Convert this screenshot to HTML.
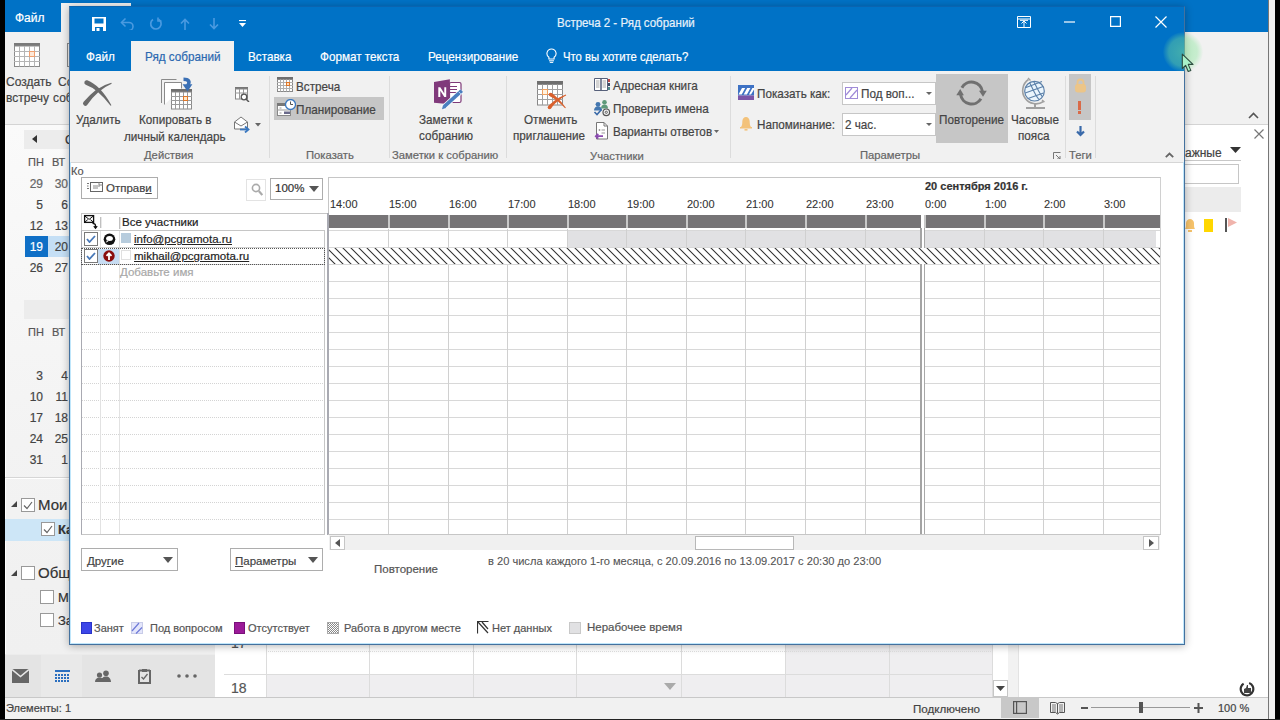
<!DOCTYPE html>
<html><head><meta charset="utf-8">
<style>
*{margin:0;padding:0;box-sizing:border-box}
html,body{width:1280px;height:720px;overflow:hidden;background:#000;font-family:"Liberation Sans",sans-serif;color:#444;font-size:12px}
.a{position:absolute;white-space:nowrap}
#main{position:absolute;left:5px;top:0;width:1263px;height:719px;background:#fff;overflow:hidden}
#dlg{position:absolute;left:69px;top:6px;width:1116px;height:639px;background:#fff;box-shadow:0 1px 8px rgba(0,0,0,.3);overflow:hidden}
#dlg .a,#main .a{-webkit-text-stroke:0.2px currentColor}
.blue{background:#0072c6}
.rib{background:#f1f1f1}
.t12{font-size:12px}
.t11{font-size:11px}
.sep{position:absolute;width:1px;background:#dadada}
</style></head><body>
<div id="main">
  <!-- title / tabs : coordinates are page x-5 -->
  <div class="a blue" style="left:0;top:0;width:1263px;height:32px"></div>
  <div class="a" style="left:10px;top:11px;color:#fff;font-size:12px">Файл</div>
  <div class="a rib" style="left:56px;top:3px;width:70px;height:29px"></div>
  <!-- ribbon -->
  <div class="a rib" style="left:0;top:32px;width:1263px;height:93px;border-bottom:1px solid #d4d4d4"></div>
  <svg class="a" style="left:9px;top:43px" width="27" height="24" viewBox="0 0 27 24"><rect x="0" y="0" width="26" height="3" fill="#7a7a7a"/><rect x="0.5" y="3" width="25" height="20.5" fill="#fff" stroke="#8a8a8a"/><path d="M5.5 3v20.5M10.5 3v20.5M15.5 3v20.5M20.5 3v20.5M0 8.5h26M0 13.5h26M0 18.5h26" stroke="#b5b5b5" stroke-width="1"/><rect x="15.5" y="8.5" width="5" height="5" fill="#fde8d8" stroke="#f0a070"/></svg>
  <div class="a" style="left:1px;top:75px;font-size:12px;color:#444">Создать</div>
  <div class="a" style="left:1px;top:91px;font-size:12px;color:#444">встречу</div>
  <div class="a" style="left:62px;top:43px;width:3px;height:24px;border:1px solid #8a8a8a;border-right:none"></div>
  <div class="a" style="left:53px;top:75px;font-size:12px;color:#444">Со</div>
  <div class="a" style="left:48px;top:91px;font-size:12px;color:#444">соб</div>
  <svg class="a" style="left:1243px;top:112px" width="11" height="7"><path d="M1 6l4.5-4.5L10 6" stroke="#555" stroke-width="1.6" fill="none"/></svg>
  <!-- left pane -->
  <div class="a" style="left:0;top:125px;width:210px;height:529px;background:linear-gradient(180deg,#fafafa 0,#f3f3f3 60%,#f0f0f0 100%)"></div><div class="a" style="left:0;top:125px;width:1px;height:529px;background:#fff"></div>
  <div class="a" style="left:19px;top:130px;width:200px;height:19px;background:#ececec"></div>
  <svg class="a" style="left:27px;top:135px" width="5" height="8"><path d="M5 0v8L0 4z" fill="#333"/></svg>
  <div class="a" style="left:60px;top:133px;font-size:12px;color:#333">Сентябрь 2016</div>
  <div class="a" style="left:60px;top:303px;font-size:12px;color:#333">Октябрь 2016</div>
  <div class="a" style="left:19px;top:300px;width:200px;height:19px;background:#ececec"></div>
  <div class="a" style="left:0;top:477px;width:210px;height:1px;background:#d6d6d6"></div><div class="a" style="left:0;top:478px;width:210px;height:1px;background:#fff"></div>
  <div class="a" style="left:0;top:519px;width:210px;height:22px;background:#cde6f7"></div>
  <div class="a" style="left:23px;top:156px;font-size:11px;color:#555">ПН</div>
  <div class="a" style="left:47px;top:156px;font-size:11px;color:#555">ВТ</div>
  <div class="a" style="left:14px;top:177px;width:24px;text-align:right;font-size:12px;color:#666">29</div>
  <div class="a" style="left:38px;top:177px;width:25px;text-align:right;font-size:12px;color:#666">30</div>
  <div class="a" style="left:14px;top:198px;width:24px;text-align:right;font-size:12px;color:#444">5</div>
  <div class="a" style="left:38px;top:198px;width:25px;text-align:right;font-size:12px;color:#444">6</div>
  <div class="a" style="left:14px;top:219px;width:24px;text-align:right;font-size:12px;color:#444">12</div>
  <div class="a" style="left:38px;top:219px;width:25px;text-align:right;font-size:12px;color:#444">13</div>
  <div class="a" style="left:20px;top:236px;width:23px;height:21px;background:#0f6fc6"></div>
  <div class="a" style="left:43px;top:236px;width:30px;height:21px;background:#c5dff5"></div>
  <div class="a" style="left:14px;top:240px;width:24px;text-align:right;font-size:12px;color:#fff">19</div>
  <div class="a" style="left:38px;top:240px;width:25px;text-align:right;font-size:12px;color:#444">20</div>
  <div class="a" style="left:14px;top:261px;width:24px;text-align:right;font-size:12px;color:#444">26</div>
  <div class="a" style="left:38px;top:261px;width:25px;text-align:right;font-size:12px;color:#444">27</div>
  <div class="a" style="left:23px;top:326px;font-size:11px;color:#555">ПН</div>
  <div class="a" style="left:47px;top:326px;font-size:11px;color:#555">ВТ</div>
  <div class="a" style="left:14px;top:369px;width:24px;text-align:right;font-size:12px;color:#444">3</div>
  <div class="a" style="left:38px;top:369px;width:25px;text-align:right;font-size:12px;color:#444">4</div>
  <div class="a" style="left:14px;top:390px;width:24px;text-align:right;font-size:12px;color:#444">10</div>
  <div class="a" style="left:38px;top:390px;width:25px;text-align:right;font-size:12px;color:#444">11</div>
  <div class="a" style="left:14px;top:411px;width:24px;text-align:right;font-size:12px;color:#444">17</div>
  <div class="a" style="left:38px;top:411px;width:25px;text-align:right;font-size:12px;color:#444">18</div>
  <div class="a" style="left:14px;top:432px;width:24px;text-align:right;font-size:12px;color:#444">24</div>
  <div class="a" style="left:38px;top:432px;width:25px;text-align:right;font-size:12px;color:#444">25</div>
  <div class="a" style="left:14px;top:453px;width:24px;text-align:right;font-size:12px;color:#444">31</div>
  <div class="a" style="left:38px;top:453px;width:25px;text-align:right;font-size:12px;color:#444">1</div>
  <svg class="a" style="left:6px;top:501px" width="6" height="6"><path d="M6 0v6H0z" fill="#444"/></svg>
  <div class="a" style="left:16px;top:498px;width:14px;height:14px;border:1px solid #999;background:#fff"></div>
  <svg class="a" style="left:18px;top:501px" width="10" height="9"><path d="M1 4.5l3 3L9 1" stroke="#666" stroke-width="1.2" fill="none"/></svg>
  <div class="a" style="left:33px;top:496px;font-size:15px;color:#333">Мои</div>
  <div class="a" style="left:36px;top:522px;width:14px;height:14px;border:1px solid #999;background:#fff"></div>
  <svg class="a" style="left:38px;top:525px" width="10" height="9"><path d="M1 4.5l3 3L9 1" stroke="#666" stroke-width="1.2" fill="none"/></svg>
  <div class="a" style="left:53px;top:522px;font-size:13px;color:#333;font-weight:bold">Ка</div>
  <svg class="a" style="left:6px;top:570px" width="6" height="6"><path d="M6 0v6H0z" fill="#444"/></svg>
  <div class="a" style="left:16px;top:566px;width:14px;height:14px;border:1px solid #999;background:#fff"></div>
  <div class="a" style="left:33px;top:564px;font-size:15px;color:#333">Общ</div>
  <div class="a" style="left:35px;top:590px;width:14px;height:14px;border:1px solid #999;background:#fff"></div>
  <div class="a" style="left:53px;top:590px;font-size:13px;color:#333">М</div>
  <div class="a" style="left:35px;top:613px;width:14px;height:14px;border:1px solid #999;background:#fff"></div>
  <div class="a" style="left:53px;top:613px;font-size:13px;color:#333">За</div>
  <!-- nav bar -->
  <div class="a" style="left:0;top:654px;width:210px;height:43px;background:#e4e4e4;border-top:1px solid #ececec"></div><div class="a" style="left:36px;top:655px;width:41px;height:42px;background:#e9e9e9"></div>
  <svg class="a" style="left:7px;top:669px" width="17" height="14"><path d="M0 0h17v14H0z" fill="#666"/><path d="M0 0.5l8.5 7 8.5-7" stroke="#e6e6e6" stroke-width="1.6" fill="none"/></svg>
  <svg class="a" style="left:50px;top:670px" width="15" height="13"><rect x="0" y="0" width="15" height="2" fill="#2b6fbf"/><g fill="#2b6fbf"><rect x="0" y="4" width="2" height="2"/><rect x="3" y="4" width="2" height="2"/><rect x="6" y="4" width="2" height="2"/><rect x="9" y="4" width="2" height="2"/><rect x="12" y="4" width="2" height="2"/><rect x="0" y="7" width="2" height="2"/><rect x="3" y="7" width="2" height="2"/><rect x="6" y="7" width="2" height="2"/><rect x="9" y="7" width="2" height="2"/><rect x="12" y="7" width="2" height="2"/><rect x="0" y="10" width="2" height="2"/><rect x="3" y="10" width="2" height="2"/><rect x="6" y="10" width="2" height="2"/><rect x="9" y="10" width="2" height="2"/><rect x="12" y="10" width="2" height="2"/></g></svg>
  <svg class="a" style="left:90px;top:670px" width="16" height="13"><circle cx="4.5" cy="5" r="2.6" fill="#666"/><circle cx="11" cy="3.2" r="2.8" fill="#666"/><path d="M0 12c0-3 2-4.5 4.5-4.5S9 9 9 12z M6 12c0-3.5 2.3-5.5 5-5.5s5 2 5 5.5z" fill="#666"/></svg>
  <svg class="a" style="left:133px;top:668px" width="13" height="16"><path d="M1 2.5h3M9 2.5h3M1 2v13h11V2" stroke="#666" stroke-width="2" fill="none"/><path d="M4 1h5v3H4z" fill="#666"/><path d="M3.5 9l2 2 4-5" stroke="#666" stroke-width="1.3" fill="none"/></svg>
  <svg class="a" style="left:172px;top:674px" width="20" height="4"><circle cx="2" cy="2" r="1.8" fill="#666"/><circle cx="10" cy="2" r="1.8" fill="#666"/><circle cx="18" cy="2" r="1.8" fill="#666"/></svg>
  <!-- calendar below -->
  <div class="a" style="left:261px;top:644px;width:520px;height:31px;background:#fff"></div>
  <div class="a" style="left:780px;top:644px;width:208px;height:31px;background:#efeef0"></div>
  <div class="a" style="left:261px;top:675px;width:727px;height:22px;background:#efeef0"></div>
  <div class="a" style="left:219px;top:674px;width:769px;height:1px;background:#dcdcdc"></div>
  <div class="a" style="left:261px;top:651px;width:727px;height:0;border-top:1px dotted #e0e0e0"></div>
  <div class="a" style="left:261px;top:644px;width:1px;height:53px;background:#dcdcdc"></div>
  <div class="a" style="left:364px;top:644px;width:1px;height:53px;background:#dcdcdc"></div>
  <div class="a" style="left:468px;top:644px;width:1px;height:53px;background:#dcdcdc"></div>
  <div class="a" style="left:571px;top:644px;width:1px;height:53px;background:#dcdcdc"></div>
  <div class="a" style="left:676px;top:644px;width:1px;height:53px;background:#dcdcdc"></div>
  <div class="a" style="left:780px;top:644px;width:1px;height:53px;background:#dcdcdc"></div>
  <div class="a" style="left:884px;top:644px;width:1px;height:53px;background:#dcdcdc"></div>
  <div class="a" style="left:987px;top:644px;width:1px;height:53px;background:#dcdcdc"></div>
  <div class="a" style="left:226px;top:680px;font-size:14px;color:#555">18</div>
  <div class="a" style="left:226px;top:635px;font-size:14px;color:#555">17</div>
  <svg class="a" style="left:659px;top:683px" width="12" height="8"><path d="M0 0h12L6 7z" fill="#aaa"/></svg>
  <div class="a" style="left:988px;top:680px;width:15px;height:17px;background:#fff;border:1px solid #c6c6c6"></div>
  <svg class="a" style="left:991px;top:686px" width="9" height="5"><path d="M0 0h9L4.5 5z" fill="#444"/></svg>
  <div class="a" style="left:1003px;top:644px;width:10px;height:53px;background:#f2f2f2"></div>
  <div class="a" style="left:1013px;top:644px;width:1px;height:53px;background:#e3e3e3"></div>
  <!-- right todo -->
  <svg class="a" style="left:1249px;top:129px" width="10" height="10"><path d="M0.5 0.5l9 9M9.5 0.5l-9 9" stroke="#777" stroke-width="1.2"/></svg>
  <div class="a" style="left:1172px;top:146px;font-size:12px;color:#444">Важные</div>
  <svg class="a" style="left:1225px;top:147px" width="11" height="6"><path d="M0 0h11L5.5 6z" fill="#333"/></svg>
  <div class="a" style="left:1140px;top:160px;width:96px;height:1px;background:#c8c8c8"></div>
  <div class="a" style="left:1140px;top:164px;width:94px;height:20px;background:#fff;border:1px solid #c6c6c6"></div>
  <div class="a" style="left:1140px;top:187px;width:96px;height:25px;background:#ececec"></div>
  <svg class="a" style="left:1178px;top:218px" width="14" height="15"><path d="M2 11c1-1 1-3 1-6 0-2 2-4 4-4s4 2 4 4c0 3 0 5 1 6z" fill="#f6c36b"/><rect x="5" y="12" width="4" height="2" fill="#f6c36b"/></svg>
  <div class="a" style="left:1199px;top:219px;width:9px;height:13px;background:#ffd700"></div>
  <div class="a" style="left:1220px;top:218px;width:2px;height:14px;background:#555"></div>
  <svg class="a" style="left:1223px;top:218px" width="10" height="9"><path d="M0 0l9 4.5L0 9z" fill="#f0b4ac"/></svg>
  <svg class="a" style="left:1234px;top:681px" width="16" height="16"><circle cx="8" cy="8" r="6.3" stroke="#333" stroke-width="2.2" fill="none" stroke-dasharray="33 7" transform="rotate(-70 8 8)"/><path d="M5 12V8l2-1 1-3 1 0v3h3v5z" fill="#444"/></svg>
  <!-- status bar -->
  <div class="a" style="left:0;top:697px;width:1263px;height:22px;background:#f1f1f1;border-top:1px solid #c8c8c8"></div>
  <div class="a" style="left:1px;top:702px;font-size:11px;color:#444">Элементы: 1</div>
  <div class="a" style="left:908px;top:702px;font-size:11.6px;color:#444">Подключено</div>
  <div class="a" style="left:996px;top:698px;width:38px;height:20px;background:#c8c8c8"></div>
  <svg class="a" style="left:1008px;top:701px" width="14" height="13"><rect x="0.6" y="0.6" width="12.8" height="11.8" fill="none" stroke="#555" stroke-width="1.2"/><path d="M3.6 0.5v12" stroke="#555" stroke-width="1.2"/></svg>
  <svg class="a" style="left:1045px;top:701px" width="15" height="14"><path d="M0.5 1.5h5l2 1.2 2-1.2h5v10h-5l-2 1.5-2-1.5h-5z" fill="none" stroke="#555"/><path d="M7.5 2.5v10" stroke="#555"/><path d="M2 4h4M2 6h4M2 8h4M2 10h4M9 4h4M9 6h4M9 8h4M9 10h4" stroke="#777"/></svg>
  <div class="a" style="left:1076px;top:707px;width:7px;height:2px;background:#555"></div>
  <div class="a" style="left:1086px;top:707px;width:99px;height:1px;background:#999"></div>
  <div class="a" style="left:1134px;top:702px;width:4px;height:11px;background:#555"></div>
  <svg class="a" style="left:1189px;top:702px" width="9" height="11"><path d="M4.5 1v10M0 6h9" stroke="#555" stroke-width="2"/></svg>
  <div class="a" style="left:1213px;top:702px;font-size:11px;color:#444">100 %</div>
</div>
<div class="a" style="left:1268px;top:0;width:7px;height:719px;background:#f0f0f0;border-left:1px solid #777"></div>
<div class="a" style="left:0;top:719px;width:1280px;height:1px;background:#222"></div>

<div id="dlg"><div class="a" style="left:0px;top:0px;width:1116px;height:65px;background:#0072c6"></div>
<div class="a" style="left:0px;top:65px;width:1116px;height:91px;background:#f1f1f1"></div>
<div class="a" style="left:0px;top:156px;width:1116px;height:1px;background:#d6d6d6"></div>
<div class="a" style="left:62px;top:35px;width:103px;height:30px;background:#f1f1f1"></div>
<div class="a" style="left:488px;top:10.63px;font-size:12.25px;line-height:1;color:#e8f1fa;font-weight:normal;transform:scaleX(.94);transform-origin:0 0">Встреча 2 - Ряд собраний</div>
<svg class="a" style="left:23px;top:11px;" width="14" height="14" viewBox="0 0 14 14"><path d="M0 0h14v14H0z" fill="#fff"/><path d="M2.5 1.5h9v5h-9z" fill="#0072c6"/><path d="M3 10h8v4H3z" fill="#0072c6"/><path d="M4.5 11h3v3h-3z" fill="#fff"/></svg>
<svg class="a" style="left:51px;top:11px;" width="14" height="13" viewBox="0 0 14 13"><path d="M2 5.5h7a4 4 0 0 1 0 8" stroke="#4a9ae0" stroke-width="1.6" fill="none"/><path d="M5.5 1.5l-4 4 4 4" stroke="#4a9ae0" stroke-width="1.6" fill="none"/></svg>
<svg class="a" style="left:80px;top:11px;" width="14" height="13" viewBox="0 0 14 13"><path d="M9.5 2.3A5.2 5.2 0 1 1 4 2.5" stroke="#4a9ae0" stroke-width="1.7" fill="none"/><path d="M9 0.5v3.5h3.5" stroke="#4a9ae0" stroke-width="1.6" fill="none"/></svg>
<svg class="a" style="left:111px;top:12px;" width="10" height="12" viewBox="0 0 10 12"><path d="M5 1.5v10.5M1 5.5l4-4 4 4" stroke="#4a9ae0" stroke-width="1.6" fill="none"/></svg>
<svg class="a" style="left:140px;top:12px;" width="10" height="12" viewBox="0 0 10 12"><path d="M5 0v10.5M1 6.5l4 4 4-4" stroke="#4a9ae0" stroke-width="1.6" fill="none"/></svg>
<svg class="a" style="left:170px;top:14px;" width="7" height="7" viewBox="0 0 7 7"><path d="M0 0.5h7" stroke="#fff" stroke-width="1.2"/><path d="M0 3h7L3.5 7z" fill="#fff"/></svg>
<svg class="a" style="left:948px;top:10px;" width="14" height="12" viewBox="0 0 14 12"><path d="M0.5 0.5h13v11H0.5z M0.5 3h13" stroke="#fff" stroke-width="1" fill="none"/><path d="M7 11.5V5M4.5 7.5L7 5l2.5 2.5" stroke="#fff" stroke-width="1" fill="none"/><path d="M3 4.3h8" stroke="#fff"/></svg>
<svg class="a" style="left:995px;top:15px;" width="11" height="2" viewBox="0 0 11 2"><path d="M0 1h11" stroke="#fff" stroke-width="1.2"/></svg>
<svg class="a" style="left:1041px;top:10px;" width="11" height="11" viewBox="0 0 11 11"><path d="M0.6 0.6h9.8v9.8H0.6z" stroke="#fff" stroke-width="1.2" fill="none"/></svg>
<svg class="a" style="left:1086px;top:10px;" width="12" height="12" viewBox="0 0 12 12"><path d="M0.5 0.5l11 11M11.5 0.5l-11 11" stroke="#fff" stroke-width="1.2"/></svg>
<div class="a" style="left:17px;top:45.13px;font-size:12.25px;line-height:1;color:#fff;font-weight:normal;transform:scaleX(.955);transform-origin:0 0">Файл</div>
<div class="a" style="left:76px;top:45.13px;font-size:12.25px;line-height:1;color:#2a68b0;font-weight:normal;transform:scaleX(.955);transform-origin:0 0">Ряд собраний</div>
<div class="a" style="left:179px;top:45.13px;font-size:12.25px;line-height:1;color:#fff;font-weight:normal;transform:scaleX(.955);transform-origin:0 0">Вставка</div>
<div class="a" style="left:251px;top:45.13px;font-size:12.25px;line-height:1;color:#fff;font-weight:normal;transform:scaleX(.955);transform-origin:0 0">Формат текста</div>
<div class="a" style="left:359px;top:45.13px;font-size:12.25px;line-height:1;color:#fff;font-weight:normal;transform:scaleX(.955);transform-origin:0 0">Рецензирование</div>
<svg class="a" style="left:477px;top:42px;" width="11" height="15" viewBox="0 0 11 15"><path d="M5.5 1a4.5 4.5 0 0 0-2.6 8.2V11h5.2V9.2A4.5 4.5 0 0 0 5.5 1z" stroke="#fff" stroke-width="1.1" fill="none"/><path d="M3 12.8h5M3.8 14.4h3.4" stroke="#fff" stroke-width="1"/></svg>
<div class="a" style="left:494px;top:45.13px;font-size:12.25px;line-height:1;color:#fff;font-weight:normal;transform:scaleX(.925);transform-origin:0 0">Что вы хотите сделать?</div>
<div class="a" style="left:200px;top:70px;width:1px;height:82px;background:#dcdcdc"></div>
<div class="a" style="left:320px;top:70px;width:1px;height:82px;background:#dcdcdc"></div>
<div class="a" style="left:437px;top:70px;width:1px;height:82px;background:#dcdcdc"></div>
<div class="a" style="left:661px;top:70px;width:1px;height:82px;background:#dcdcdc"></div>
<div class="a" style="left:996px;top:70px;width:1px;height:82px;background:#dcdcdc"></div>
<div class="a" style="left:1026px;top:70px;width:1px;height:82px;background:#dcdcdc"></div>
<svg class="a" style="left:9px;top:70px;" width="40" height="34" viewBox="0 0 40 34"><path d="M9.28 4.34Q22.2 9.2 33.42 29.23L32.58 29.77Q19.8 12.8 7.72 8.66A2.3 2.3 0 0 1 9.28 4.34Z" fill="#6b6b6b"/><path d="M33.31 6.63Q18 10.5 5.46 26.12A2.3 2.3 0 0 0 9.14 28.88Q20 13.5 33.69 7.77Z" fill="#6b6b6b"/></svg>
<div class="a" style="left:7px;top:107.93px;font-size:12.25px;line-height:1;color:#444;font-weight:normal;transform:scaleX(.955);transform-origin:0 0">Удалить</div>
<svg class="a" style="left:91px;top:70px;" width="34" height="34" viewBox="0 0 34 34"><path d="M1.5 27V3.5h15" stroke="#8a8a8a" stroke-width="1" fill="none"/><path d="M4.5 28.5V6.5h17v6" stroke="#8a8a8a" stroke-width="1" fill="#fff"/><rect x="11" y="13" width="21" height="3" fill="#6f6f6f"/><rect x="11.5" y="16" width="20" height="17" fill="#fff" stroke="#8a8a8a"/><path d="M15.5 16v17M19.5 16v17M23.5 16v17M27.5 16v17M11 20.5h21M11 24.5h21M11 28.5h21" stroke="#9a9a9a"/><rect x="23.5" y="20.5" width="4" height="4" fill="#fde8c8" stroke="#e0782a"/><path d="M23.5 3.2C28.5 3.2 30.5 5.5 27.6 9.5" stroke="#3b70b5" stroke-width="3.6" fill="none"/><path d="M22.6 8.3h9.8l-4.9 7.2z" fill="#3b70b5"/></svg>
<div class="a" style="left:70px;top:107.93px;font-size:12.25px;line-height:1;color:#444;font-weight:normal;transform:scaleX(.955);transform-origin:0 0">Копировать в</div>
<div class="a" style="left:55px;top:124.63px;font-size:12.25px;line-height:1;color:#444;font-weight:normal;transform:scaleX(.955);transform-origin:0 0">личный календарь</div>
<svg class="a" style="left:166px;top:81px;" width="15" height="15" viewBox="0 0 15 15"><rect x="0" y="0" width="13" height="2" fill="#777"/><rect x="0.5" y="2" width="12" height="10" fill="#fff" stroke="#888"/><path d="M4.5 2v10M8.5 2v10M0 6h13" stroke="#999"/><circle cx="9" cy="10" r="2.8" fill="#fff" stroke="#555" stroke-width="1.3"/><path d="M11 12l3 3" stroke="#555" stroke-width="1.5"/></svg>
<svg class="a" style="left:165px;top:110px;" width="16" height="17" viewBox="0 0 16 17"><path d="M0.5 6l6.5-5 6.5 5v7h-13z" fill="#fff" stroke="#777"/><path d="M0.5 6l6.5 4 6.5-4" stroke="#777" fill="none"/><path d="M6 13.5h7" stroke="#3a78c0" stroke-width="1.8"/><path d="M11 10.5l3.5 3-3.5 3" stroke="#3a78c0" stroke-width="1.8" fill="none"/></svg>
<svg class="a" style="left:186px;top:117px;" width="6" height="4" viewBox="0 0 6 4"><path d="M0 0h6L3 3.5z" fill="#666"/></svg>
<div class="a" style="left:75px;top:144.48px;font-size:11.25px;line-height:1;color:#666;font-weight:normal;">Действия</div>
<svg class="a" style="left:208px;top:71px;" width="16" height="15" viewBox="0 0 16 15"><rect x="0" y="0" width="16" height="2.5" fill="#6f6f6f"/><rect x="0.5" y="2.5" width="15" height="12" fill="#fff" stroke="#888"/><path d="M3.5 2.5v12M6.5 2.5v12M9.5 2.5v12M12.5 2.5v12M0 5.5h16M0 8.5h16M0 11.5h16" stroke="#b0b0b0"/><rect x="9.5" y="5.5" width="3" height="3" fill="#fde0c0" stroke="#e0782a"/></svg>
<div class="a" style="left:227px;top:74.63px;font-size:12.25px;line-height:1;color:#444;font-weight:normal;transform:scaleX(.955);transform-origin:0 0">Встреча</div>
<div class="a" style="left:205px;top:91px;width:110px;height:23px;background:#c6c6c6"></div>
<svg class="a" style="left:208px;top:93px;" width="19" height="18" viewBox="0 0 19 18"><rect x="0.5" y="4.5" width="13" height="12" fill="#fff" stroke="#888"/><rect x="0" y="4" width="14" height="3" fill="#777"/><path d="M0 11h14" stroke="#999"/><path d="M2.5 9h2M2.5 14h2" stroke="#999"/><rect x="7" y="12.5" width="6" height="2.5" fill="#6a6a8a"/><circle cx="13.5" cy="5.5" r="5" fill="#fff" stroke="#3a78c0" stroke-width="1.3"/><path d="M13.5 2.5v3h2.5" stroke="#555" stroke-width="1" fill="none"/></svg>
<div class="a" style="left:227px;top:97.63px;font-size:12.25px;line-height:1;color:#444;font-weight:normal;transform:scaleX(.955);transform-origin:0 0">Планирование</div>
<div class="a" style="left:237px;top:144.48px;font-size:11.25px;line-height:1;color:#666;font-weight:normal;">Показать</div>
<svg class="a" style="left:363px;top:73px;" width="32" height="32" viewBox="0 0 32 32"><rect x="17.5" y="3.5" width="11.5" height="20" rx="1.5" fill="#fff" stroke="#7e3a78" stroke-width="1.2"/><path d="M18 7.5h7M18 10.5h7M18 13.5h7" stroke="#7e3a78" stroke-width="1.2"/><path d="M2 2.9L17.9 0.3V25.3L2 23.8z" fill="#80397b"/><path d="M6.3 18V8.2h2l4 6.4V8.2h1.9V18h-1.9l-4-6.3V18z" fill="#fff"/><path d="M29.8 11.6L10.6 29.2" stroke="#fff" stroke-width="5.2"/><path d="M29.8 11.6L12.2 27.6" stroke="#4a7fbf" stroke-width="3.6"/><path d="M10 30.2l1-4.3 3.2 3.2z" fill="#4a7fbf"/><path d="M26.6 12.7l2.2 2.2" stroke="#cfe3f6" stroke-width="0.9"/></svg>
<div class="a" style="left:350px;top:108.23px;font-size:12.25px;line-height:1;color:#444;font-weight:normal;transform:scaleX(.955);transform-origin:0 0">Заметки к</div>
<div class="a" style="left:350px;top:124.33px;font-size:12.25px;line-height:1;color:#444;font-weight:normal;transform:scaleX(.955);transform-origin:0 0">собранию</div>
<div class="a" style="left:323px;top:144.48px;font-size:11.25px;line-height:1;color:#666;font-weight:normal;">Заметки к собранию</div>
<svg class="a" style="left:468px;top:74px;" width="31" height="31" viewBox="0 0 31 31"><rect x="0" y="1" width="26" height="3.5" fill="#6f6f6f"/><rect x="0.5" y="4.5" width="25" height="20.5" fill="#fff" stroke="#888"/><path d="M5.5 4.5v20.5M10.5 4.5v20.5M15.5 4.5v20.5M20.5 4.5v20.5M0 9.5h26M0 14.5h26M0 19.5h26" stroke="#a0a0a0"/><rect x="5.5" y="9.5" width="5" height="5" fill="#fff3e0" stroke="#f0a060"/><path d="M11 11L31 31V11z" fill="#f1f1f1" opacity="0"/><g fill="#d9612e"><path d="M12.57 16.04 L13.83 16.70 L15.09 17.42 L16.36 18.21 L17.65 19.07 L18.94 19.99 L20.23 20.98 L21.53 22.04 L22.84 23.16 L24.15 24.35 L25.47 25.61 L26.79 26.93 L28.12 28.32 L28.88 27.68 L27.71 26.13 L26.53 24.64 L25.35 23.21 L24.16 21.84 L22.97 20.53 L21.77 19.27 L20.56 18.07 L19.35 16.93 L18.14 15.85 L16.91 14.83 L15.67 13.86 L14.43 12.96Z"/><circle cx="13.5" cy="14.5" r="1.80"/><path d="M28.79 14.54 L27.09 15.23 L25.42 15.97 L23.80 16.76 L22.22 17.60 L20.68 18.50 L19.18 19.46 L17.73 20.47 L16.31 21.54 L14.94 22.66 L13.62 23.84 L12.34 25.07 L11.10 26.36 L13.90 28.64 L14.88 27.31 L15.91 26.02 L16.99 24.78 L18.13 23.58 L19.32 22.41 L20.57 21.29 L21.87 20.21 L23.23 19.17 L24.64 18.18 L26.10 17.23 L27.63 16.32 L29.21 15.46Z"/><circle cx="12.5" cy="27.5" r="1.80"/></g></svg>
<div class="a" style="left:455px;top:108.23px;font-size:12.25px;line-height:1;color:#444;font-weight:normal;transform:scaleX(.955);transform-origin:0 0">Отменить</div>
<div class="a" style="left:444px;top:124.33px;font-size:12.25px;line-height:1;color:#444;font-weight:normal;transform:scaleX(.955);transform-origin:0 0">приглашение</div>
<svg class="a" style="left:525px;top:72px;" width="16" height="13" viewBox="0 0 16 13"><path d="M0.5 0.5h6.5v12h-6.5zM7 0.5h6.5v12H7z" fill="#fff" stroke="#56607a"/><path d="M2 3h3.5M2 5h3.5M2 7h3.5M2 9h3.5M8.5 3h3.5M8.5 5h3.5M8.5 7h3.5M8.5 9h3.5" stroke="#a8a8a8"/><rect x="14" y="1" width="2" height="3" fill="#c04848"/><rect x="14" y="5" width="2" height="3" fill="#3e4a66"/><rect x="14" y="9" width="2" height="3" fill="#4f8a8a"/></svg>
<div class="a" style="left:544px;top:74.13px;font-size:12.25px;line-height:1;color:#444;font-weight:normal;transform:scaleX(.955);transform-origin:0 0">Адресная книга</div>
<svg class="a" style="left:524px;top:93px;" width="18" height="18" viewBox="0 0 18 18"><circle cx="11.5" cy="3.3" r="2.3" fill="#5f9a7a"/><path d="M8 9.5c0-2.5 1.5-4 3.5-4s3.5 1.5 3.5 4z" fill="#5f9a7a"/><circle cx="5" cy="5.3" r="2.4" fill="#4477b0"/><path d="M1 11.5c0-2.7 1.7-4.3 4-4.3s4 1.6 4 4.3z" fill="#4477b0"/><path d="M1.5 13l2.5 2.5 4.5-5" stroke="#3a6aa8" stroke-width="1.6" fill="none"/><circle cx="13.3" cy="13.3" r="3.3" fill="#f1f1f1" stroke="#555" stroke-width="1.2"/><circle cx="13.3" cy="13.3" r="1.1" fill="none" stroke="#555" stroke-width="0.9"/></svg>
<div class="a" style="left:544px;top:97.23px;font-size:12.25px;line-height:1;color:#444;font-weight:normal;transform:scaleX(.955);transform-origin:0 0">Проверить имена</div>
<svg class="a" style="left:525px;top:116px;" width="15" height="18" viewBox="0 0 15 18"><path d="M2.5 0.5h7.5l3.5 3.5v13h-11z" fill="#fff" stroke="#777"/><path d="M10 0.5v3.5h3.5" stroke="#777" fill="none"/><circle cx="5.5" cy="8" r="0.9" fill="#999"/><path d="M7.5 8h3.5M7.5 11h3.5" stroke="#999"/><path d="M9 14.2H2M4.3 11.8L1.8 14.2l2.5 2.5" stroke="#8a4ab0" stroke-width="1.8" fill="none"/></svg>
<div class="a" style="left:544px;top:119.63px;font-size:12.25px;line-height:1;color:#444;font-weight:normal;transform:scaleX(.955);transform-origin:0 0">Варианты ответов</div>
<svg class="a" style="left:645px;top:124px;" width="5" height="3" viewBox="0 0 5 3"><path d="M0 0h5L2.5 3z" fill="#666"/></svg>
<div class="a" style="left:521px;top:144.68px;font-size:11.25px;line-height:1;color:#666;font-weight:normal;">Участники</div>
<svg class="a" style="left:669px;top:79px;" width="16" height="15" viewBox="0 0 16 15"><rect x="0" y="0" width="16" height="10.5" fill="#3e72c4"/><rect x="0" y="10.5" width="16" height="4.5" fill="#7b55a8"/><path d="M0.5 9.5L4 3h3.2L3.7 9.5zM5.7 9.5L9.2 3h3.2L8.9 9.5zM10.9 9.5L14.4 3H16v1.6L13 9.5z" fill="#fff"/></svg>
<div class="a" style="left:688px;top:81.53px;font-size:12.25px;line-height:1;color:#444;font-weight:normal;transform:scaleX(.955);transform-origin:0 0">Показать как:</div>
<div class="a" style="left:773px;top:76px;width:94px;height:23px;background:#fff;border:1px solid #c6c6c6"></div>
<svg class="a" style="left:776px;top:81px;" width="13" height="12" viewBox="0 0 13 12"><rect x="0.5" y="0.5" width="12" height="11" fill="#fff" stroke="#a08cd8"/><path d="M1 8l6-7M5 11l7-8" stroke="#a08cd8" stroke-width="1.2"/></svg>
<div class="a" style="left:792px;top:81.53px;font-size:12.25px;line-height:1;color:#444;font-weight:normal;transform:scaleX(.955);transform-origin:0 0">Под воп...</div>
<svg class="a" style="left:857px;top:86px;" width="6" height="3" viewBox="0 0 6 3"><path d="M0 0h6L3 3z" fill="#666"/></svg>
<svg class="a" style="left:670px;top:110px;" width="14" height="15" viewBox="0 0 14 15"><path d="M2 11c1-1.2 1.3-3 1.3-5.5C3.3 3 5 1 7 1s3.7 2 3.7 4.5c0 2.5.3 4.3 1.3 5.5z" fill="#f3c27a"/><rect x="1" y="11" width="12" height="1.5" fill="#f3c27a"/><rect x="5.5" y="13" width="3" height="1.6" fill="#f3c27a"/></svg>
<div class="a" style="left:688px;top:112.83px;font-size:12.25px;line-height:1;color:#444;font-weight:normal;transform:scaleX(.955);transform-origin:0 0">Напоминание:</div>
<div class="a" style="left:773px;top:107px;width:94px;height:23px;background:#fff;border:1px solid #c6c6c6"></div>
<div class="a" style="left:776px;top:112.83px;font-size:12.25px;line-height:1;color:#444;font-weight:normal;transform:scaleX(.955);transform-origin:0 0">2 час.</div>
<svg class="a" style="left:857px;top:117px;" width="6" height="3" viewBox="0 0 6 3"><path d="M0 0h6L3 3z" fill="#666"/></svg>
<div class="a" style="left:867px;top:68px;width:72px;height:69px;background:#c6c6c6"></div>
<svg class="a" style="left:881px;top:68px;" width="44" height="36" viewBox="0 0 44 36"><path d="M11.88 13.67A11 11 0 0 1 32.39 17.47" stroke="#707070" stroke-width="3" fill="none"/><path d="M29 16.8h7.8L33 22.8z" fill="#707070"/><path d="M30.93 24.67A11 11 0 0 1 10.61 20.53" stroke="#707070" stroke-width="3" fill="none"/><path d="M6.3 21.2h7.6L10.2 15z" fill="#707070"/></svg>
<div class="a" style="left:870px;top:108.03px;font-size:12.25px;line-height:1;color:#444;font-weight:normal;transform:scaleX(.955);transform-origin:0 0">Повторение</div>
<svg class="a" style="left:951px;top:71px;" width="29" height="33" viewBox="0 0 29 33"><circle cx="14.5" cy="14.2" r="9.8" fill="#eaf5fd" stroke="#5a7fa8" stroke-width="1.2"/><path d="M6 10.5l16-6M5.2 16l18-6.5M8 21.5l15.5-5.5" stroke="#5a7fa8" stroke-width="1.1" fill="none"/><path d="M9.5 5.5c3 5 5 12 9.5 17M13.5 4.3c3 5 5.5 12 9 15.5" stroke="#5a7fa8" stroke-width="1.1" fill="none"/><path d="M8.5 2.5A12.5 12.5 0 0 0 23.5 24.5" stroke="#a0a0a0" stroke-width="1.6" fill="none"/><path d="M8 1l2.5 2.5M22 23l2.5 2" stroke="#a0a0a0" stroke-width="1.4"/><path d="M15 26.5v4M6 31h19" stroke="#a0a0a0" stroke-width="2"/></svg>
<div class="a" style="left:942px;top:108.03px;font-size:12.25px;line-height:1;color:#444;font-weight:normal;transform:scaleX(.955);transform-origin:0 0">Часовые</div>
<div class="a" style="left:949px;top:124.03px;font-size:12.25px;line-height:1;color:#444;font-weight:normal;transform:scaleX(.955);transform-origin:0 0">пояса</div>
<svg class="a" style="left:984px;top:146px;" width="8" height="7" viewBox="0 0 8 7"><path d="M0.5 7V0.5h7" stroke="#777" fill="none"/><path d="M3 3l4 4M7 4v3H4" stroke="#777" fill="none"/></svg>
<div class="a" style="left:791px;top:144.48px;font-size:11.25px;line-height:1;color:#666;font-weight:normal;">Параметры</div>
<div class="a" style="left:1000px;top:68px;width:22px;height:46px;background:#c6c6c6"></div>
<svg class="a" style="left:1005px;top:72px;" width="13" height="15" viewBox="0 0 13 15"><path d="M3.5 7V4.5a3 3 0 0 1 6 0V7" stroke="#f2c47c" stroke-width="1.8" fill="none" opacity=".8"/><rect x="1" y="6" width="11" height="8.5" rx="3" fill="#f2c47c" opacity=".85"/></svg>
<div class="a" style="left:1009px;top:95px;width:3px;height:9px;background:#d96a48"></div>
<div class="a" style="left:1009px;top:105px;width:3px;height:3px;background:#d96a48"></div>
<svg class="a" style="left:1007px;top:120px;" width="9" height="11" viewBox="0 0 9 11"><path d="M4.5 0v9M1 5.5l3.5 3.5 3.5-3.5" stroke="#3a6aaa" stroke-width="2.2" fill="none"/></svg>
<div class="a" style="left:1000px;top:144.38px;font-size:11.25px;line-height:1;color:#666;font-weight:normal;">Теги</div>
<svg class="a" style="left:1096px;top:146px;" width="9" height="6" viewBox="0 0 9 6"><path d="M0.8 5.2L4.5 1.5l3.7 3.7" stroke="#666" stroke-width="1.8" fill="none"/></svg>
<div class="a" style="left:2px;top:160.19px;font-size:11px;line-height:1;color:#555;font-weight:normal;">Ко</div>
<div class="a" style="left:12px;top:171px;width:77px;height:22px;background:#fff;border:1px solid #adadad"></div>
<svg class="a" style="left:18px;top:175px;" width="16" height="13" viewBox="0 0 16 13"><path d="M0 2.5h2M0 5h1.5M0 7.5h2" stroke="#777"/><rect x="3.5" y="1.5" width="12" height="9" fill="#fff" stroke="#666"/><path d="M6 5h7M6 7h5" stroke="#888"/><path d="M12 1.5v2.5h3.5" stroke="#888" fill="none"/></svg>
<div class="a" style="left:37px;top:176.77px;font-size:11.5px;line-height:1;color:#444;font-weight:normal;">Отправ<u>и</u></div>
<div class="a" style="left:177px;top:173px;width:20px;height:22px;background:#fff;border:1px solid #e3e3e3"></div>
<svg class="a" style="left:182px;top:177px;" width="12" height="13" viewBox="0 0 12 13"><circle cx="5" cy="5" r="3.6" fill="none" stroke="#aaa" stroke-width="1.6"/><path d="M7.8 8l3.5 4" stroke="#aaa" stroke-width="2.2"/></svg>
<div class="a" style="left:201px;top:172px;width:53px;height:22px;background:#fff;border:1px solid #adadad"></div>
<div class="a" style="left:206px;top:177.27px;font-size:11.5px;line-height:1;color:#333;font-weight:normal;">100%</div>
<svg class="a" style="left:240px;top:180px;" width="10" height="6" viewBox="0 0 10 6"><path d="M0 0h10L5 6z" fill="#555"/></svg>
<div class="a" style="left:12px;top:207px;width:247px;height:18px;background:#fff;border-top:1px solid #c6c6c6;border-left:1px solid #c6c6c6"></div>
<div class="a" style="left:12px;top:224px;width:244px;height:305px;background:#fff;border:1px solid #c6c6c6;border-left-color:#a9aab2"></div>
<div class="a" style="left:13px;top:275px;width:242px;height:1px;background-image:repeating-linear-gradient(90deg,#d4d4d4 0 1px,transparent 1px 2px)"></div>
<div class="a" style="left:13px;top:292px;width:242px;height:1px;background-image:repeating-linear-gradient(90deg,#d4d4d4 0 1px,transparent 1px 2px)"></div>
<div class="a" style="left:13px;top:309px;width:242px;height:1px;background-image:repeating-linear-gradient(90deg,#d4d4d4 0 1px,transparent 1px 2px)"></div>
<div class="a" style="left:13px;top:326px;width:242px;height:1px;background-image:repeating-linear-gradient(90deg,#d4d4d4 0 1px,transparent 1px 2px)"></div>
<div class="a" style="left:13px;top:343px;width:242px;height:1px;background-image:repeating-linear-gradient(90deg,#d4d4d4 0 1px,transparent 1px 2px)"></div>
<div class="a" style="left:13px;top:360px;width:242px;height:1px;background-image:repeating-linear-gradient(90deg,#d4d4d4 0 1px,transparent 1px 2px)"></div>
<div class="a" style="left:13px;top:377px;width:242px;height:1px;background-image:repeating-linear-gradient(90deg,#d4d4d4 0 1px,transparent 1px 2px)"></div>
<div class="a" style="left:13px;top:394px;width:242px;height:1px;background-image:repeating-linear-gradient(90deg,#d4d4d4 0 1px,transparent 1px 2px)"></div>
<div class="a" style="left:13px;top:411px;width:242px;height:1px;background-image:repeating-linear-gradient(90deg,#d4d4d4 0 1px,transparent 1px 2px)"></div>
<div class="a" style="left:13px;top:428px;width:242px;height:1px;background-image:repeating-linear-gradient(90deg,#d4d4d4 0 1px,transparent 1px 2px)"></div>
<div class="a" style="left:13px;top:445px;width:242px;height:1px;background-image:repeating-linear-gradient(90deg,#d4d4d4 0 1px,transparent 1px 2px)"></div>
<div class="a" style="left:13px;top:462px;width:242px;height:1px;background-image:repeating-linear-gradient(90deg,#d4d4d4 0 1px,transparent 1px 2px)"></div>
<div class="a" style="left:13px;top:479px;width:242px;height:1px;background-image:repeating-linear-gradient(90deg,#d4d4d4 0 1px,transparent 1px 2px)"></div>
<div class="a" style="left:13px;top:496px;width:242px;height:1px;background-image:repeating-linear-gradient(90deg,#d4d4d4 0 1px,transparent 1px 2px)"></div>
<div class="a" style="left:13px;top:513px;width:242px;height:1px;background-image:repeating-linear-gradient(90deg,#d4d4d4 0 1px,transparent 1px 2px)"></div>
<div class="a" style="left:31px;top:258px;width:1px;height:270px;background:#e2e2e2"></div>
<div class="a" style="left:31px;top:225px;width:1px;height:33px;background:#e0e0e0"></div>
<div class="a" style="left:50px;top:258px;width:1px;height:270px;background:#e2e2e2"></div>
<div class="a" style="left:50px;top:225px;width:1px;height:33px;background:#e0e0e0"></div>
<div class="a" style="left:13px;top:241px;width:242px;height:1px;background:#d0d0d0"></div>
<div class="a" style="left:13px;top:258px;width:242px;height:1px;background:#d0d0d0"></div>
<svg class="a" style="left:14px;top:208px;" width="16" height="16" viewBox="0 0 16 16"><rect x="1.6" y="1.6" width="9" height="6.8" fill="#fff" stroke="#111" stroke-width="1.3"/><path d="M1.6 1.8l4.5 3.6 4.5-3.6M1.8 8.2l3-2.6M10.4 8.2l-3-2.6" stroke="#111" stroke-width="1" fill="none"/><path d="M9.5 9.3c2 0 3 .5 3 2.2v2.8M10.8 12.2l1.7 2 1.7-2" stroke="#111" stroke-width="1.2" fill="none"/></svg>
<div class="a" style="left:31px;top:211px;width:1px;height:11px;background:#c0c0c0"></div>
<div class="a" style="left:32px;top:211px;width:1px;height:11px;background:#e8e8e8"></div>
<div class="a" style="left:50px;top:211px;width:1px;height:12px;background:#c0c0c0"></div>
<div class="a" style="left:51px;top:211px;width:1px;height:12px;background:#e8e8e8"></div>
<div class="a" style="left:53px;top:211.27px;font-size:11.5px;line-height:1;color:#222;font-weight:normal;">Все участники</div>
<div class="a" style="left:15px;top:226px;width:14px;height:14px;background:#fff;border:1px solid #7a7a7a"></div>
<svg class="a" style="left:17px;top:229px;" width="10" height="8" viewBox="0 0 10 8"><path d="M1 4l2.5 3L9 1" stroke="#4878b8" stroke-width="1.8" fill="none"/></svg>
<svg class="a" style="left:34px;top:227px;" width="13" height="13" viewBox="0 0 13 13"><circle cx="6.5" cy="6.3" r="5.8" fill="#111"/><ellipse cx="6.5" cy="5.6" rx="3.4" ry="2.5" fill="#fff"/><path d="M4 7.5l-1.3 2.3 2.8-1.5z" fill="#fff"/></svg>
<div class="a" style="left:52px;top:227px;width:10px;height:10px;background:#b7ccdd"></div>
<div class="a" style="left:65px;top:228.27px;font-size:11.5px;line-height:1;color:#222;font-weight:normal;"><u>info@pcgramota.ru</u></div>
<div class="a" style="left:29px;top:243px;width:21px;height:15px;background:#c7dcf2"></div>
<div class="a" style="left:12px;top:242px;width:244px;height:17px;border:1px dotted #555"></div>
<div class="a" style="left:15px;top:243px;width:14px;height:14px;background:#fff;border:1px solid #7a7a7a"></div>
<svg class="a" style="left:17px;top:246px;" width="10" height="8" viewBox="0 0 10 8"><path d="M1 4l2.5 3L9 1" stroke="#4878b8" stroke-width="1.8" fill="none"/></svg>
<svg class="a" style="left:34px;top:244px;" width="12" height="12" viewBox="0 0 12 12"><circle cx="6" cy="6" r="5.7" fill="#8a0c0c"/><path d="M6 10V4M3.5 5.8L6 3.2l2.5 2.6" stroke="#fff" stroke-width="1.8" fill="none"/></svg>
<div class="a" style="left:52px;top:244px;width:10px;height:10px;background:#fff;border:1px solid #e0e0e0"></div>
<div class="a" style="left:65px;top:245.27px;font-size:11.5px;line-height:1;color:#222;font-weight:normal;"><u>mikhail@pcgramota.ru</u></div>
<div class="a" style="left:51px;top:261.17px;font-size:11.5px;line-height:1;color:#a8a8a8;font-weight:normal;">Добавьте имя</div>
<div class="a" style="left:259px;top:171px;width:833px;height:358px;background:#fff;border-top:1px solid #c6c6c6;border-right:1px solid #d0d0d0"></div>
<div class="a" style="left:258px;top:207px;width:2px;height:322px;background:#a9aab2"></div>
<div class="a" style="left:259px;top:172px;width:1px;height:35px;background:#c6c6c6"></div>
<div class="a" style="left:856px;top:174.69px;font-size:11px;line-height:1;color:#333;font-weight:bold;">20 сентября 2016 г.</div>
<div class="a" style="left:261px;top:192.69px;font-size:11px;line-height:1;color:#333;font-weight:normal;-webkit-text-stroke:0.1px #333">14:00</div>
<div class="a" style="left:320px;top:192.69px;font-size:11px;line-height:1;color:#333;font-weight:normal;-webkit-text-stroke:0.1px #333">15:00</div>
<div class="a" style="left:380px;top:192.69px;font-size:11px;line-height:1;color:#333;font-weight:normal;-webkit-text-stroke:0.1px #333">16:00</div>
<div class="a" style="left:439px;top:192.69px;font-size:11px;line-height:1;color:#333;font-weight:normal;-webkit-text-stroke:0.1px #333">17:00</div>
<div class="a" style="left:499px;top:192.69px;font-size:11px;line-height:1;color:#333;font-weight:normal;-webkit-text-stroke:0.1px #333">18:00</div>
<div class="a" style="left:558px;top:192.69px;font-size:11px;line-height:1;color:#333;font-weight:normal;-webkit-text-stroke:0.1px #333">19:00</div>
<div class="a" style="left:618px;top:192.69px;font-size:11px;line-height:1;color:#333;font-weight:normal;-webkit-text-stroke:0.1px #333">20:00</div>
<div class="a" style="left:677px;top:192.69px;font-size:11px;line-height:1;color:#333;font-weight:normal;-webkit-text-stroke:0.1px #333">21:00</div>
<div class="a" style="left:737px;top:192.69px;font-size:11px;line-height:1;color:#333;font-weight:normal;-webkit-text-stroke:0.1px #333">22:00</div>
<div class="a" style="left:797px;top:192.69px;font-size:11px;line-height:1;color:#333;font-weight:normal;-webkit-text-stroke:0.1px #333">23:00</div>
<div class="a" style="left:856px;top:192.69px;font-size:11px;line-height:1;color:#333;font-weight:normal;-webkit-text-stroke:0.1px #333">0:00</div>
<div class="a" style="left:916px;top:192.69px;font-size:11px;line-height:1;color:#333;font-weight:normal;-webkit-text-stroke:0.1px #333">1:00</div>
<div class="a" style="left:975px;top:192.69px;font-size:11px;line-height:1;color:#333;font-weight:normal;-webkit-text-stroke:0.1px #333">2:00</div>
<div class="a" style="left:1035px;top:192.69px;font-size:11px;line-height:1;color:#333;font-weight:normal;-webkit-text-stroke:0.1px #333">3:00</div>
<div class="a" style="left:260px;top:209px;width:831px;height:13px;background:#767476"></div>
<div class="a" style="left:499px;top:225px;width:588px;height:16px;background:#e1e1e3"></div>
<svg class="a" style="left:260px;top:242px" width="831" height="16"><defs><pattern id="hp" patternUnits="userSpaceOnUse" width="8" height="8" x="-2"><path d="M-2 -2L10 10M-2 6L2 10M6 -2L10 2" stroke="#303030" stroke-width="1.05"/></pattern></defs><rect width="831" height="16" fill="#fff"/><rect width="831" height="16" fill="url(#hp)"/></svg>
<div class="a" style="left:260px;top:224px;width:831px;height:1px;background:#d8d8d8"></div>
<div class="a" style="left:260px;top:241px;width:831px;height:1px;background:#d8d8d8"></div>
<div class="a" style="left:260px;top:258px;width:831px;height:1px;background:#d8d8d8"></div>
<div class="a" style="left:260px;top:275px;width:831px;height:1px;background:#d8d8d8"></div>
<div class="a" style="left:260px;top:292px;width:831px;height:1px;background:#d8d8d8"></div>
<div class="a" style="left:260px;top:309px;width:831px;height:1px;background:#d8d8d8"></div>
<div class="a" style="left:260px;top:326px;width:831px;height:1px;background:#d8d8d8"></div>
<div class="a" style="left:260px;top:343px;width:831px;height:1px;background:#d8d8d8"></div>
<div class="a" style="left:260px;top:360px;width:831px;height:1px;background:#d8d8d8"></div>
<div class="a" style="left:260px;top:377px;width:831px;height:1px;background:#d8d8d8"></div>
<div class="a" style="left:260px;top:394px;width:831px;height:1px;background:#d8d8d8"></div>
<div class="a" style="left:260px;top:411px;width:831px;height:1px;background:#d8d8d8"></div>
<div class="a" style="left:260px;top:428px;width:831px;height:1px;background:#d8d8d8"></div>
<div class="a" style="left:260px;top:445px;width:831px;height:1px;background:#d8d8d8"></div>
<div class="a" style="left:260px;top:462px;width:831px;height:1px;background:#d8d8d8"></div>
<div class="a" style="left:260px;top:479px;width:831px;height:1px;background:#d8d8d8"></div>
<div class="a" style="left:260px;top:496px;width:831px;height:1px;background:#d8d8d8"></div>
<div class="a" style="left:260px;top:513px;width:831px;height:1px;background:#d8d8d8"></div>
<div class="a" style="left:259px;top:528px;width:833px;height:1px;background:#c6c6c6"></div>
<div class="a" style="left:319px;top:209px;width:2px;height:13px;background:#c8c8c8"></div>
<div class="a" style="left:319px;top:223px;width:1px;height:19px;background:#d0d0d0"></div>
<div class="a" style="left:319px;top:259px;width:1px;height:269px;background:#d0d0d0"></div>
<div class="a" style="left:379px;top:209px;width:2px;height:13px;background:#c8c8c8"></div>
<div class="a" style="left:379px;top:223px;width:1px;height:19px;background:#d0d0d0"></div>
<div class="a" style="left:379px;top:259px;width:1px;height:269px;background:#d0d0d0"></div>
<div class="a" style="left:438px;top:209px;width:2px;height:13px;background:#c8c8c8"></div>
<div class="a" style="left:438px;top:223px;width:1px;height:19px;background:#d0d0d0"></div>
<div class="a" style="left:438px;top:259px;width:1px;height:269px;background:#d0d0d0"></div>
<div class="a" style="left:498px;top:209px;width:2px;height:13px;background:#c8c8c8"></div>
<div class="a" style="left:498px;top:223px;width:1px;height:19px;background:#d0d0d0"></div>
<div class="a" style="left:498px;top:259px;width:1px;height:269px;background:#d0d0d0"></div>
<div class="a" style="left:557px;top:209px;width:2px;height:13px;background:#c8c8c8"></div>
<div class="a" style="left:557px;top:223px;width:1px;height:19px;background:#d0d0d0"></div>
<div class="a" style="left:557px;top:259px;width:1px;height:269px;background:#d0d0d0"></div>
<div class="a" style="left:617px;top:209px;width:2px;height:13px;background:#c8c8c8"></div>
<div class="a" style="left:617px;top:223px;width:1px;height:19px;background:#d0d0d0"></div>
<div class="a" style="left:617px;top:259px;width:1px;height:269px;background:#d0d0d0"></div>
<div class="a" style="left:676px;top:209px;width:2px;height:13px;background:#c8c8c8"></div>
<div class="a" style="left:676px;top:223px;width:1px;height:19px;background:#d0d0d0"></div>
<div class="a" style="left:676px;top:259px;width:1px;height:269px;background:#d0d0d0"></div>
<div class="a" style="left:736px;top:209px;width:2px;height:13px;background:#c8c8c8"></div>
<div class="a" style="left:736px;top:223px;width:1px;height:19px;background:#d0d0d0"></div>
<div class="a" style="left:736px;top:259px;width:1px;height:269px;background:#d0d0d0"></div>
<div class="a" style="left:796px;top:209px;width:2px;height:13px;background:#c8c8c8"></div>
<div class="a" style="left:796px;top:223px;width:1px;height:19px;background:#d0d0d0"></div>
<div class="a" style="left:796px;top:259px;width:1px;height:269px;background:#d0d0d0"></div>
<div class="a" style="left:855px;top:209px;width:2px;height:13px;background:#c8c8c8"></div>
<div class="a" style="left:855px;top:223px;width:1px;height:19px;background:#d0d0d0"></div>
<div class="a" style="left:855px;top:259px;width:1px;height:269px;background:#d0d0d0"></div>
<div class="a" style="left:915px;top:209px;width:2px;height:13px;background:#c8c8c8"></div>
<div class="a" style="left:915px;top:223px;width:1px;height:19px;background:#d0d0d0"></div>
<div class="a" style="left:915px;top:259px;width:1px;height:269px;background:#d0d0d0"></div>
<div class="a" style="left:974px;top:209px;width:2px;height:13px;background:#c8c8c8"></div>
<div class="a" style="left:974px;top:223px;width:1px;height:19px;background:#d0d0d0"></div>
<div class="a" style="left:974px;top:259px;width:1px;height:269px;background:#d0d0d0"></div>
<div class="a" style="left:1034px;top:209px;width:2px;height:13px;background:#c8c8c8"></div>
<div class="a" style="left:1034px;top:223px;width:1px;height:19px;background:#d0d0d0"></div>
<div class="a" style="left:1034px;top:259px;width:1px;height:269px;background:#d0d0d0"></div>
<div class="a" style="left:852px;top:209px;width:3px;height:13px;background:#fff"></div>
<div class="a" style="left:851px;top:222px;width:2px;height:20px;background:#a4a4a4"></div>
<div class="a" style="left:853px;top:222px;width:2px;height:20px;background:#fff"></div>
<div class="a" style="left:855px;top:222px;width:1px;height:20px;background:#a8a8a8"></div>
<div class="a" style="left:851px;top:258px;width:2px;height:270px;background:#a4a4a4"></div>
<div class="a" style="left:853px;top:258px;width:2px;height:270px;background:#fff"></div>
<div class="a" style="left:855px;top:258px;width:1px;height:270px;background:#a8a8a8"></div>
<div class="a" style="left:260px;top:529px;width:831px;height:15px;background:#f0f0f0"></div>
<div class="a" style="left:261px;top:530px;width:15px;height:14px;background:#fff;border:1px solid #c6c6c6"></div>
<svg class="a" style="left:266px;top:533px;" width="5" height="8" viewBox="0 0 5 8"><path d="M5 0v8L0 4z" fill="#555"/></svg>
<div class="a" style="left:626px;top:530px;width:99px;height:14px;background:#fff;border:1px solid #b8b8b8"></div>
<div class="a" style="left:1074px;top:530px;width:16px;height:14px;background:#fff;border:1px solid #c6c6c6"></div>
<svg class="a" style="left:1080px;top:533px;" width="5" height="8" viewBox="0 0 5 8"><path d="M0 0v8l5-4z" fill="#555"/></svg>
<div class="a" style="left:12px;top:542px;width:97px;height:23px;background:#fff;border:1px solid #adadad"></div>
<div class="a" style="left:18px;top:549.77px;font-size:11.5px;line-height:1;color:#444;font-weight:normal;">Дру<u>г</u>ие</div>
<svg class="a" style="left:94px;top:551px;" width="10" height="6" viewBox="0 0 10 6"><path d="M0 0h10L5 6z" fill="#555"/></svg>
<div class="a" style="left:161px;top:542px;width:93px;height:23px;background:#fff;border:1px solid #adadad"></div>
<div class="a" style="left:166px;top:549.77px;font-size:11.5px;line-height:1;color:#444;font-weight:normal;"><u>П</u>араметры</div>
<svg class="a" style="left:239px;top:551px;" width="10" height="6" viewBox="0 0 10 6"><path d="M0 0h10L5 6z" fill="#555"/></svg>
<div class="a" style="left:305px;top:557.77px;font-size:11.5px;line-height:1;color:#555;font-weight:normal;">Повторение</div>
<div class="a" style="left:419px;top:549.60px;font-size:11.1px;line-height:1;color:#555;font-weight:normal;-webkit-text-stroke:0.1px #555">в 20 числа каждого 1-го месяца, с 20.09.2016 по 13.09.2017 с 20:30 до 23:00</div>
<div class="a" style="left:12px;top:616px;width:11px;height:12px;background:#3c46e8;border:1px solid #2a34c8"></div>
<div class="a" style="left:25px;top:616.69px;font-size:11px;line-height:1;color:#555;font-weight:normal;">Занят</div>
<svg class="a" style="left:62px;top:616px;" width="12" height="12" viewBox="0 0 12 12"><rect x="0.5" y="0.5" width="11" height="11" fill="#e4e6fb" stroke="#c8cce8"/><path d="M1 9l7-8M5 11.5l6-6" stroke="#6e7ad8" stroke-width="1.2"/></svg>
<div class="a" style="left:81px;top:616.69px;font-size:11px;line-height:1;color:#555;font-weight:normal;">Под вопросом</div>
<div class="a" style="left:165px;top:616px;width:11px;height:12px;background:#9b1a98;border:1px solid #7a107a"></div>
<div class="a" style="left:179px;top:616.69px;font-size:11px;line-height:1;color:#555;font-weight:normal;">Отсутствует</div>
<svg class="a" style="left:258px;top:616px" width="12" height="12"><defs><pattern id="dp" patternUnits="userSpaceOnUse" width="2" height="2"><rect width="1" height="1" fill="#888"/><rect x="1" y="1" width="1" height="1" fill="#888"/></pattern></defs><rect x="0.5" y="0.5" width="11" height="11" fill="url(#dp)" stroke="#aaa"/></svg>
<div class="a" style="left:275px;top:616.69px;font-size:11px;line-height:1;color:#555;font-weight:normal;">Работа в другом месте</div>
<svg class="a" style="left:408px;top:615px;" width="12" height="13" viewBox="0 0 12 13"><path d="M0.5 12.5V0.5h11" stroke="#333" stroke-width="1.2" fill="none"/><path d="M1 1l10 11M5 1l6 7" stroke="#333" stroke-width="1.2"/></svg>
<div class="a" style="left:423px;top:616.69px;font-size:11px;line-height:1;color:#555;font-weight:normal;">Нет данных</div>
<div class="a" style="left:500px;top:616px;width:12px;height:12px;background:#e1e1e3;border:1px solid #c8c8c8"></div>
<div class="a" style="left:518px;top:616.27px;font-size:11.5px;line-height:1;color:#555;font-weight:normal;">Нерабочее время</div>
<div class="a" style="left:0;top:0;width:1116px;height:639px;border:1px solid #44719e;border-top-color:#0a64b0"></div><div class="a" style="left:1px;top:156px;width:1px;height:482px;background:#bfe6fb"></div><div class="a" style="left:1114px;top:156px;width:1px;height:482px;background:#bfe6fb"></div><div class="a" style="left:1px;top:637px;width:1114px;height:1px;background:#bfe6fb"></div></div><div class="a" style="left:1163px;top:32px;width:40px;height:40px;border-radius:50%;background:radial-gradient(circle,rgba(130,230,150,.5) 0,rgba(130,230,150,.38) 50%,rgba(130,230,150,0) 72%)"></div>
<svg class="a" style="left:1181px;top:53px" width="14" height="21" viewBox="0 0 14 21"><path d="M1.3 1.2V15.5l3.3-3.2 2.6 6.2 2.6-1.1-2.6-6h4.8z" fill="#a8f2c8" stroke="#2e4d40" stroke-width="1.1" stroke-linejoin="round"/></svg>
</body></html>
